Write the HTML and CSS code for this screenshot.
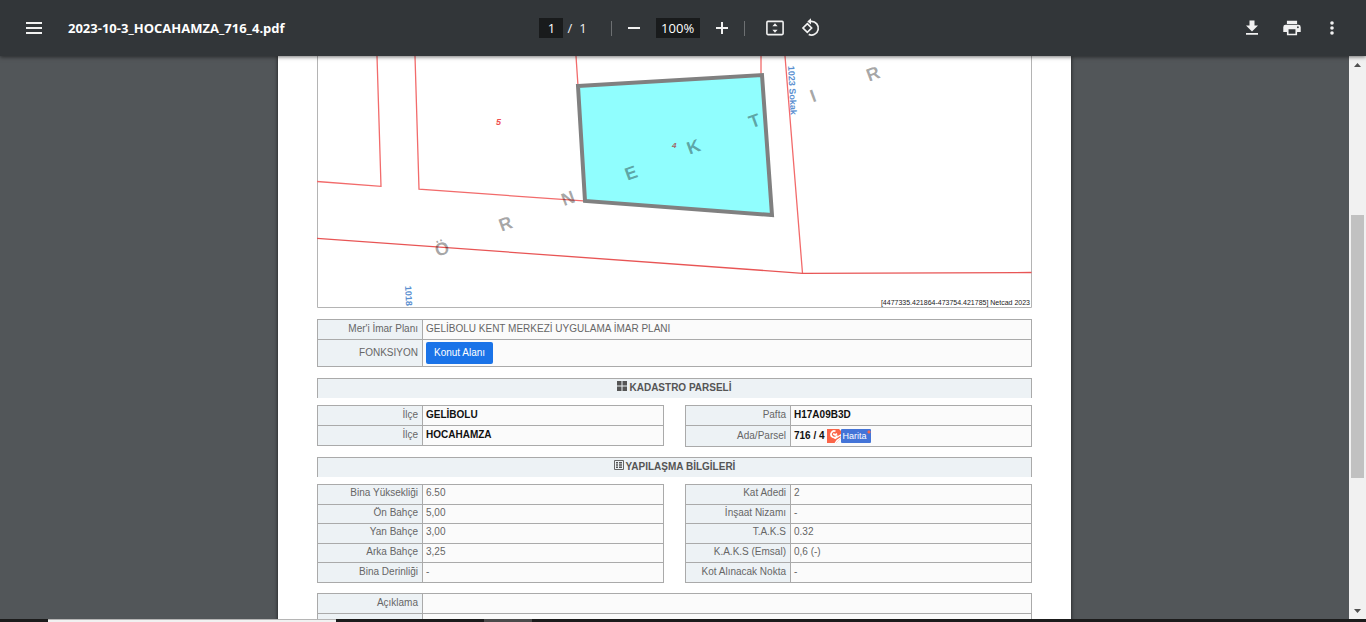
FILE: index.html
```html
<!DOCTYPE html>
<html lang="tr">
<head>
<meta charset="utf-8">
<title>2023-10-3_HOCAHAMZA_716_4.pdf</title>
<link rel="stylesheet" href="styles.css">
</head>
<body>
<header class="toolbar">
  <div class="toolbar-start">
    <button class="icon-btn" aria-label="Menü"><svg width="24" height="24" viewBox="0 0 24 24"><path d="M4 6h16v2H4zM4 11h16v2H4zM4 16h16v2H4z"/></svg></button>
    <h1 class="file-name">2023-10-3_HOCAHAMZA_716_4.pdf</h1>
  </div>
  <div class="toolbar-center">
    <input class="field field-page" aria-label="Sayfa numarası" value="1">
    <span class="page-count"><span>/</span><span>1</span></span>
    <span class="divider"></span>
    <button class="icon-btn" aria-label="Uzaklaştır"><svg width="20" height="20" viewBox="0 0 20 20"><path d="M4 9h12v2H4z"/></svg></button>
    <input class="field field-zoom" aria-label="Yakınlaştırma düzeyi" value="100%">
    <button class="icon-btn" aria-label="Yakınlaştır"><svg width="20" height="20" viewBox="0 0 20 20"><path d="M4 9h5V4h2v5h5v2h-5v5H9v-5H4z"/></svg></button>
    <span class="divider"></span>
    <div class="view-tools">
      <button class="icon-btn" aria-label="Sayfaya sığdır"><svg width="20" height="20" viewBox="0 0 20 20"><rect x="1.9" y="3.4" width="16.2" height="13.2" rx="1" fill="none" stroke="#f1f1f1" stroke-width="1.6"/><path d="M10 5.3l2.6 3H7.4zM10 14.7l2.6-3H7.4z"/></svg></button>
      <button class="icon-btn" aria-label="Döndür"><svg width="20" height="20" viewBox="0 0 20 20"><path d="M6.3 5.7L10.600 10l-4.300 4.300L2 10z" fill="none" stroke="#f1f1f1" stroke-width="1.700"/><path d="M8.600 3.400h1.800a6.800 6.800 0 1 1-2.700 13" fill="none" stroke="#f1f1f1" stroke-width="1.700"/><path d="M10 .2v6.400L6.300 3.400z"/></svg></button>
    </div>
  </div>
  <div class="toolbar-end">
    <button class="icon-btn" aria-label="İndir"><svg width="20" height="20" viewBox="0 0 20 20"><path d="M7.500 2.500h5v5H16l-6 6-6-6h3.500zM4 15h12v1.700H4z"/></svg></button>
    <button class="icon-btn" aria-label="Yazdır"><svg width="20" height="20" viewBox="1 2 22 20"><path fill-rule="evenodd" d="M19 8.500H5a2.600 2.600 0 0 0-2.600 2.600v5.400h4V20h11.200v-3.500h4v-5.400A2.600 2.600 0 0 0 19 8.500zM15.800 18.300H8.200v-5h7.600zm2.700-6.100a1 1 0 1 1 0-2 1 1 0 0 1 0 2zM17.600 4H6.400v3.600h11.200z"/></svg></button>
    <button class="icon-btn" aria-label="Diğer işlemler"><svg width="20" height="20" viewBox="0 0 20 20"><circle cx="10" cy="5" r="1.800"/><circle cx="10" cy="10" r="1.800"/><circle cx="10" cy="15" r="1.800"/></svg></button>
  </div>
</header>

<main class="viewer">
  <div class="canvas">
    <article class="page">
      <svg class="map" viewBox="0 0 715 252" role="img" aria-label="Parsel haritası">
        <path d="M.5 0v251.500h714V0" fill="none" stroke="#b4b4b4"/>
        <g fill="none" stroke="#f26b6b" stroke-width="1.300">
          <path d="M60 0l4 130.300L0 125.500M98 0l4 133.200 168 12M259 0l2 30M444 0v20M468 0l17.500 217.300"/>
          <path d="M0 182.300l485.500 35 229-.8" stroke="#e85555"/>
        </g>
        <path d="M261 30l184-11 10 140-187-14z" fill="#90fefe" stroke="#808080" stroke-width="4"/>
        <g class="watermark">
          <text transform="translate(125 193) rotate(-20)" y="6">Ö</text>
          <text transform="translate(188.500 168) rotate(-20)" y="6">R</text>
          <text transform="translate(251 142.500) rotate(-20)" y="6">N</text>
          <text transform="translate(314 117) rotate(-20)" y="6">E</text>
          <text transform="translate(376.500 91) rotate(-20)" y="6">K</text>
          <text transform="translate(437.500 65) rotate(-20)" y="6">T</text>
          <text transform="translate(496 40) rotate(-20)" y="6">I</text>
          <text transform="translate(556 18) rotate(-20)" y="6">R</text>
        </g>
        <text class="parcel" x="179" y="69">5</text>
        <text class="parcel parcel-active" x="355" y="92">4</text>
        <text class="street" transform="translate(471 10) rotate(87)">1023 Sokak</text>
        <text class="street" transform="translate(88 230) rotate(87)">1018</text>
        <text class="coords" x="713" y="249">[4477335.421864-473754.421785] Netcad 2023</text>
      </svg>

      <table class="data plan">
        <tr><th scope="row">Mer'i İmar Planı</th><td>GELİBOLU KENT MERKEZİ UYGULAMA İMAR PLANI</td></tr>
        <tr class="row-tall"><th scope="row">FONKSIYON</th><td><button class="tag">Konut Alanı</button></td></tr>
      </table>

      <h2 class="section-title"><svg width="10" height="10" viewBox="0 0 10 10"><path d="M0 0h4.500v4.500H0zM5.500 0H10v4.500H5.500zM0 5.500h4.500V10H0zM5.500 5.500H10V10H5.500z"/></svg>KADASTRO PARSELİ</h2>
      <div class="columns">
        <table class="data strong rows-two">
          <tr><th scope="row">İlçe</th><td>GELİBOLU</td></tr>
          <tr><th scope="row">İlçe</th><td>HOCAHAMZA</td></tr>
        </table>
        <table class="data strong">
          <tr><th scope="row">Pafta</th><td>H17A09B3D</td></tr>
          <tr class="row-map"><th scope="row">Ada/Parsel</th><td><div class="parcel-cell"><span>716 / 4</span><a class="map-link" href="#"><svg width="14" height="14" viewBox="0 0 14 14"><path fill="#fb6549" d="M0 0h12l2 2v7l-5 5H0z"/><path fill="none" stroke="#fff" stroke-width="1.700" d="M8.500 2.300A3.200 3.200 0 1 0 10.200 6.500M6.200 4.800l2 1.200 1.800-1.400"/><path fill="#fff" d="M7 9.500L14 5v4l-5 5H7.500l2-3z"/><path stroke="#fb6549" stroke-width="1.300" d="M7.500 11.500L13.500 7.500"/></svg><span class="map-label">Harita</span></a></div></td></tr>
        </table>
      </div>

      <h2 class="section-title"><svg width="10" height="10" viewBox="0 0 10 10"><path fill="none" stroke="#666" d="M.5.5h9v9h-9z"/><path d="M2 2h2v1.500H2zM5 2h3v1.500H5zM2 4.300h2v1.400H2zM5 4.300h3v1.400H5zM2 6.500h2V8H2zM5 6.500h3V8H5z"/></svg>YAPILAŞMA BİLGİLERİ</h2>
      <div class="columns">
        <table class="data rows-five">
          <tr><th scope="row">Bina Yüksekliği</th><td>6.50</td></tr>
          <tr><th scope="row">Ön Bahçe</th><td>5,00</td></tr>
          <tr><th scope="row">Yan Bahçe</th><td>3,00</td></tr>
          <tr><th scope="row">Arka Bahçe</th><td>3,25</td></tr>
          <tr><th scope="row">Bina Derinliği</th><td>-</td></tr>
        </table>
        <table class="data rows-five">
          <tr><th scope="row">Kat Adedi</th><td>2</td></tr>
          <tr><th scope="row">İnşaat Nizamı</th><td>-</td></tr>
          <tr><th scope="row">T.A.K.S</th><td>0.32</td></tr>
          <tr><th scope="row">K.A.K.S (Emsal)</th><td>0,6 (-)</td></tr>
          <tr><th scope="row">Kot Alınacak Nokta</th><td>-</td></tr>
        </table>
      </div>

      <table class="data notes">
        <tr><th scope="row">Açıklama</th><td></td></tr>
        <tr><th scope="row"></th><td></td></tr>
      </table>
    </article>
  </div>
  <div class="scrollbar" aria-hidden="true">
    <span class="arrow"><svg width="7" height="4" viewBox="0 0 7 4"><path d="M3.500 0L7 4H0z"/></svg></span>
    <span class="track-before"></span>
    <span class="thumb"></span>
    <span class="track-after"></span>
    <span class="arrow"><svg width="7" height="4" viewBox="0 0 7 4"><path d="M3.500 4L7 0H0z"/></svg></span>
  </div>
</main>
<footer class="taskbar"><span class="task-search"></span><span class="task-active"></span></footer>
</body>
</html>
```
FILE: styles.css
```css
* { box-sizing: border-box; }
body {
  margin: 0;
  height: 100vh;
  display: flex;
  flex-direction: column;
  overflow: hidden;
  background: #525659;
  font-family: "Liberation Sans", Arial, sans-serif;
}
button, input { font: inherit; border: 0; padding: 0; }
svg { display: block; flex: none; }

.toolbar {
  flex: none;
  height: 56px;
  padding: 0 18px;
  display: grid;
  grid-template-columns: 1fr auto 1fr;
  align-items: center;
  background: #323639;
  color: #f1f1f1;
  box-shadow: 0 1px 4px rgba(0, 0, 0, .55);
  position: relative;
  z-index: 1;
  font-family: "Open Sans", "Noto Sans", sans-serif;
  font-size: 13px;
}
.toolbar-start, .toolbar-center, .toolbar-end, .view-tools { display: flex; align-items: center; }
.toolbar-start { gap: 18px; }
.toolbar-center { gap: 6px; }
.toolbar-end { gap: 8px; justify-content: flex-end; }
.view-tools { gap: 4px; margin-left: 8px; }
.file-name { margin: 0; font-size: 13px; font-weight: 700; white-space: nowrap; color: #fff; }
.icon-btn {
  width: 32px;
  height: 32px;
  display: flex;
  align-items: center;
  justify-content: center;
  background: none;
  fill: #f1f1f1;
}
.field { height: 20px; background: #191b1c; color: #fff; text-align: center; }
.field-page { width: 24px; }
.field-zoom { width: 44px; }
.page-count { display: flex; gap: 7px; margin: 0 18px 0 -2px; }
.divider { width: 1px; height: 15px; background: #6d7072; }

.viewer { flex: 1; min-height: 0; display: flex; }
.canvas { flex: 1; overflow: hidden; }
.page {
  width: 100%;
  max-width: 793px;
  min-height: 100%;
  margin: 0 auto;
  padding: 0 39px;
  background: #fff;
  box-shadow: 0 0 4px rgba(0, 0, 0, .7);
  color: #666;
  font-size: 10px;
  line-height: 12px;
}
.map { width: 100%; margin-bottom: 11px; }
.map text { font-family: "Liberation Sans", Arial, sans-serif; }
.watermark { font-size: 18px; font-weight: 700; fill: #000; fill-opacity: .36; text-anchor: middle; }
.parcel { font-size: 9px; font-weight: 700; font-style: italic; fill: #f05050; }
.parcel-active { font-size: 8px; fill: #a06868; }
.street { font-size: 9px; font-weight: 700; fill: #5b8fd0; }
.coords { font-size: 7px; fill: #222; text-anchor: end; }

.data { width: 100%; border-collapse: collapse; table-layout: fixed; }
.data th, .data td { height: 20px; padding: 0 3px 2px; border: 1px solid #aaa; }
.data th { width: 105px; padding-right: 4px; background: #edf2f5; text-align: right; font-weight: 400; }
.data td { background: #fbfbfb; }
.data .row-tall th, .data .row-tall td { height: 27px; padding-bottom: 0; }
.data .row-map th, .data .row-map td { height: 21px; padding-bottom: 0; }
.strong td { color: #111; font-weight: 700; }
.plan { margin-bottom: 11px; }
.columns { display: grid; grid-template-columns: 1fr 1fr; gap: 21px; align-items: start; margin-bottom: 10px; }
.rows-five th, .rows-five td { height: 19px; }
.rows-five { height: 99px; }

.section-title {
  display: flex;
  justify-content: center;
  align-items: center;
  gap: 2px;
  height: 20px;
  margin: 0 0 7px;
  padding-bottom: 2px;
  border: 1px solid #aaa;
  border-bottom: 0;
  background: #edf2f5;
  color: #555;
  font-size: 10px;
  font-weight: 700;
}
.section-title svg { fill: #555; margin-bottom: 4px; }
.tag {
  display: block;
  height: 22px;
  padding: 0 8px;
  border-radius: 2px;
  background: #1a73e8;
  color: #fff;
}
.parcel-cell, .map-link { display: flex; align-items: center; }
.parcel-cell { gap: 2px; }
.map-link { color: #fff; text-decoration: none; font-weight: 400; font-size: 9px; }
.map-label { height: 14px; padding: 0 4px 0 2px; border-radius: 1px; line-height: 14px; background: radial-gradient(circle at calc(100% - 2px) 3px, #fb6549 1px, #4474d8 2px); }

.scrollbar { flex: none; width: 17px; display: flex; flex-direction: column; align-items: center; background: #f1f1f1; }
.arrow { height: 17px; display: flex; align-items: center; fill: #505050; }
.track-before { flex: 142; }
.thumb { flex: 263; width: 13px; background: #c1c1c1; }
.track-after { flex: 124; }

.taskbar { flex: none; height: 3px; display: flex; background: #1b1b1b; position: relative; z-index: 1; }
.task-search { width: 288px; margin-left: 48px; background: #f1f1f1; border-top: 1px solid #b5b5b5; }
.task-active { width: 48px; margin-left: 148px; background: #4b4b4b; }
```
